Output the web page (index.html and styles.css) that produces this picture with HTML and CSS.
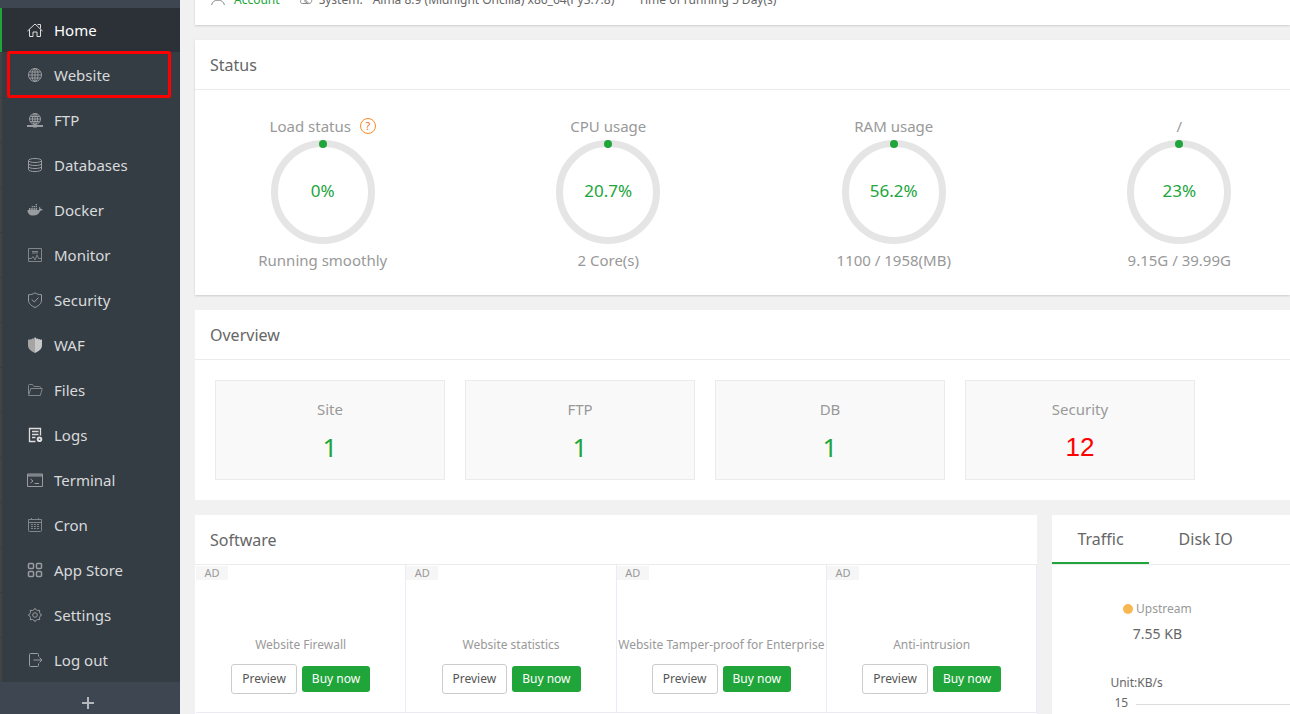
FILE: index.html
```
<!DOCTYPE html>
<html lang="en">
<head>
<meta charset="utf-8">
<title>Server panel</title>
<link rel="stylesheet" href="styles.css">
</head>
<body>
<div class="layout">
  <nav class="sidebar">
    <ul class="menu">
      <li><a class="item active" href="#"><svg class="icon" viewBox="0 0 16 16"><path d="M.5 9L8 2l7.500 7M2.500 7.500v7H6V10h4v4.500h3.500v-7M10.500 2.500h3v4"/></svg>Home</a></li>
      <li><a class="item marked" href="#"><svg class="icon" viewBox="0 0 16 16"><circle cx="8" cy="8" r="6.500"/><ellipse cx="8" cy="8" rx="3" ry="6.500"/><path d="M8 1.500v13M1.500 8h13M2.500 5h11M2.500 11h11"/></svg>Website</a></li>
      <li><a class="item" href="#"><svg class="icon" viewBox="0 0 16 16"><circle cx="8" cy="7" r="5.500"/><ellipse cx="8" cy="7" rx="2.500" ry="5.500"/><path d="M8 1.500v11M2.500 7h11M3.500 4.500h9M3.500 9.500h9"/><path class="thick" d="M0 14h16M6 14.500h4"/></svg>FTP</a></li>
      <li><a class="item" href="#"><svg class="icon" viewBox="0 0 16 16"><ellipse cx="8" cy="3.500" rx="6.500" ry="2"/><path d="M1.500 3.500v9c0 2.700 13 2.700 13 0v-9M1.500 6.500c0 2.700 13 2.700 13 0M1.500 9.500c0 2.700 13 2.700 13 0"/></svg>Databases</a></li>
      <li><a class="item" href="#"><svg class="icon solid" viewBox="0 0 16 16"><path d="M.5 8h11.200c.6-.6.700-1.800.1-2.600l.8-.4c.8.500 1.100 1.200 1.100 2 .8-.1 1.500 0 2 .4-.4.900-1.300 1.300-2.500 1.300C12 12 9.500 13.500 6.300 13.500 2.500 13.500.5 11.500.5 8zM2 6h1.500v2.500H2zM4.200 6h1.500v2.500H4.200zM6.400 6h1.500v2.500H6.400zM8.600 6h1.500v2.500H8.600zM4.700 4H6v1.200H4.700zM6.600 4H8v1.200H6.600zM8.600 2H10v1.200H8.600zM8.600 4H10v1.200H8.600z"/></svg>Docker</a></li>
      <li><a class="item" href="#"><svg class="icon dim" viewBox="0 0 16 16"><path d="M1.500 1.500h13v13h-13zM5 4.500h6M5 6h6M2 11.500h2.500L6 9.500l2 3.500 2-5 1.500 3.500H14"/></svg>Monitor</a></li>
      <li><a class="item" href="#"><svg class="icon" viewBox="0 0 16 16"><path d="M8 .8c2 1.400 4 1.900 6.500 1.900V8c0 3.500-2.500 5.700-6.500 7.500C4 13.700 1.500 11.500 1.500 8V2.700C4 2.700 6 2.200 8 .8zM4.700 7.500L7.300 10l4.200-4.500"/></svg>Security</a></li>
      <li><a class="item" href="#"><svg class="icon" viewBox="0 0 16 16"><path class="half-left" d="M8 0v16C4 14 1 12 1 8.500V2.300l1.500.7.500-1 1.500.6L5 1.500l1.500.3z"/><path class="half-right" d="M8 0v16c4-2 7-4 7-7.500V2.300l-1.500.7-.5-1-1.500.6-.5-1.100-1.500.3z"/></svg>WAF</a></li>
      <li><a class="item" href="#"><svg class="icon dim" viewBox="0 0 16 16"><path d="M1.500 12V3.500q0-1 1-1h3l1.500 2h5.500q1 0 1 1v1M1.500 13.500L3.800 6.500h11.500l-2 7z"/></svg>Files</a></li>
      <li><a class="item" href="#"><svg class="icon bright" viewBox="0 0 16 16"><path d="M8.500 14.500h-6v-13h11v7M5 4.500h6.500M5 7.500h6.500M5 10.500h3.500"/><circle class="thick" cx="12.500" cy="12.300" r="1.800"/></svg>Logs</a></li>
      <li><a class="item" href="#"><svg class="icon" viewBox="0 0 16 16"><path d="M.5 2h15v12.500H.5zM.5 3h15M.5 4h15M3.500 7l2.500 2-2.500 2M7.500 11.500H12"/></svg>Terminal</a></li>
      <li><a class="item" href="#"><svg class="icon dim" viewBox="0 0 16 16"><path d="M1.500 2.500h13v11q0 1-1 1h-11q-1 0-1-1zM1.500 5.500h13M4.500 1v2M11.500 1v2"/><path class="dots" d="M4 7.500h9M4 9.500h9M4 11.500h9"/></svg>Cron</a></li>
      <li><a class="item" href="#"><svg class="icon boxes" viewBox="0 0 16 16"><rect x="1.500" y="1.500" width="5" height="5" rx="1"/><rect x="9.500" y="1.500" width="5" height="5" rx="1"/><rect x="1.500" y="9.500" width="5" height="5" rx="1"/><rect x="9.500" y="9.500" width="5" height="5" rx="1"/></svg>App Store</a></li>
      <li><a class="item" href="#"><svg class="icon" viewBox="0 0 16 16"><path d="M6.700 3L8 1.300 9.300 3l1.200.5 2.200-.2-.2 2.200.5 1.200L14.700 8 13 9.300l-.5 1.200.2 2.200-2.200-.2-1.200.5L8 14.700 6.700 13l-1.200-.5-2.200.2.2-2.200L3 9.300 1.300 8 3 6.700l.5-1.200-.2-2.200 2.200.2z"/><circle cx="8" cy="8" r="2.300"/></svg>Settings</a></li>
      <li><a class="item" href="#"><svg class="icon" viewBox="0 0 16 16"><path d="M11.500 4.500v-2q0-1-1-1h-7q-1 0-1 1v11q0 1 1 1h7q1 0 1-1v-2M6.500 8h8.500M12.500 5.500L15 8l-2.500 2.500"/></svg>Log out</a></li>
    </ul>
    <button class="add" aria-label="Add menu item"><svg class="plus" viewBox="0 0 14 14"><path d="M7 1v12M1 7h12"/></svg></button>
  </nav>

  <main class="content">
    <section class="card infobar">
      <a class="account" href="#"><svg class="user" viewBox="0 0 16 20"><circle cx="8" cy="6" r="4"/><path d="M1.500 15c1-3 3-5 6.500-5s5.500 2 6.500 5"/></svg>Account</a>
      <span class="system"><svg class="os" viewBox="0 0 14 20"><path d="M3.500 9C1 9.500.5 13.500 3.500 13.500h6c4 0 4-4.500 1.500-4.500M5 8.500l5 5M8 9.500c-3 0-3 3 0 3"/></svg>System:</span>
      <span class="os-name">Alma 8.9 (Midnight Oncilla) x86_64(Py3.7.8)</span>
      <span>Time of running 5 Day(s)</span>
    </section>

    <section class="card">
      <h2 class="title">Status</h2>
      <div class="gauges">
        <div class="gauge">
          <h3 class="label">Load status<span class="help">?</span></h3>
          <div class="ring">0%</div>
          <p class="label">Running smoothly</p>
        </div>
        <div class="gauge">
          <h3 class="label">CPU usage</h3>
          <div class="ring">20.7%</div>
          <p class="label">2 Core(s)</p>
        </div>
        <div class="gauge">
          <h3 class="label">RAM usage</h3>
          <div class="ring">56.2%</div>
          <p class="label">1100 / 1958(MB)</p>
        </div>
        <div class="gauge">
          <h3 class="label">/</h3>
          <div class="ring">23%</div>
          <p class="label">9.15G / 39.99G</p>
        </div>
      </div>
    </section>

    <section class="card flat">
      <h2 class="title">Overview</h2>
      <div class="tiles">
        <div class="tile"><p class="label">Site</p><a class="count" href="#">1</a></div>
        <div class="tile"><p class="label">FTP</p><a class="count" href="#">1</a></div>
        <div class="tile"><p class="label">DB</p><a class="count" href="#">1</a></div>
        <div class="tile"><p class="label">Security</p><a class="count alert" href="#">12</a></div>
      </div>
    </section>

    <div class="columns">
      <section class="card flat">
        <h2 class="title">Software</h2>
        <div class="ads">
          <div class="ad"><span class="tag">AD</span><p class="name">Website Firewall</p><div class="actions"><button class="preview">Preview</button><button class="buy">Buy now</button></div></div>
          <div class="ad"><span class="tag">AD</span><p class="name">Website statistics</p><div class="actions"><button class="preview">Preview</button><button class="buy">Buy now</button></div></div>
          <div class="ad"><span class="tag">AD</span><p class="name">Website Tamper-proof for Enterprise</p><div class="actions"><button class="preview">Preview</button><button class="buy">Buy now</button></div></div>
          <div class="ad"><span class="tag">AD</span><p class="name">Anti-intrusion</p><div class="actions"><button class="preview">Preview</button><button class="buy">Buy now</button></div></div>
        </div>
      </section>
      <section class="card flat">
        <div class="tabs"><button class="tab current">Traffic</button><button class="tab">Disk IO</button></div>
        <div class="traffic">
          <div class="stat"><p class="legend"><span class="dot"></span>Upstream</p><p class="value">7.55 KB</p></div>
          <div class="chart"><p class="unit">Unit:KB/s</p><div class="axis"><span class="tick">15</span><span class="line"></span></div></div>
        </div>
      </section>
    </div>
  </main>
</div>
</body>
</html>
```
FILE: styles.css
```
* { box-sizing: border-box; }
html, body { height: 100%; }
body {
  margin: 0;
  overflow: hidden;
  background: #f1f1f1;
  color: #666;
  font-family: "Noto Sans", "Open Sans", sans-serif;
  font-size: 12px;
  line-height: 20px;
}
h2, h3, p, ul { margin: 0; padding: 0; font-weight: 400; list-style: none; }
a { color: inherit; text-decoration: none; }
button { font: inherit; color: inherit; cursor: pointer; }

.layout { display: flex; min-height: 100%; }

.sidebar {
  flex: none;
  width: 180px;
  display: flex;
  flex-direction: column;
  padding-top: 8px;
  background: #3d4651;
}
.menu { display: grid; gap: 1px; background: #353d44; }
.item {
  position: relative;
  display: flex;
  align-items: center;
  gap: 11px;
  height: 44px;
  padding-left: 25px;
  border-left: 2px solid #434343;
  color: #d8dadc;
  font-size: 15px;
}
.item.active { background: #2c3138; border-left-color: #20a53a; color: #fff; }
.marked::after {
  content: "";
  position: absolute;
  inset: -2px 9px -1px 5px;
  border: 3px solid #f00;
  border-radius: 2px;
}
.icon { width: 16px; height: 16px; fill: none; stroke: #999ca0; stroke-width: 1; }
.active .icon { stroke: #ddd; }
.icon.solid { fill: #999ca0; stroke: none; }
.icon.dim { stroke: #81868a; }
.icon.bright { stroke: #ddd; stroke-width: 1.300; }
.icon.boxes { stroke-width: 1.500; }
.half-left { fill: #a5a5a5; stroke: none; }
.half-right { fill: #c8c8c8; stroke: none; }
.thick { stroke-width: 2; }
.dots { stroke-dasharray: 2 1; }
.add {
  display: flex;
  justify-content: center;
  padding: 14px 5px 0 0;
  border: 0;
  background: none;
}
.plus { width: 14px; height: 14px; stroke: #b4b8bc; stroke-width: 2; }

.content {
  flex: 1;
  min-width: 0;
  display: flex;
  flex-direction: column;
  gap: 15px;
  padding-left: 15px;
}
.card { background: #fff; box-shadow: 0 1px 2px #ccc; overflow: hidden; }
.card.flat { box-shadow: none; }
.title {
  height: 50px;
  padding-left: 15px;
  border-bottom: 1px solid #ebebeb;
  font-size: 16px;
  line-height: 50px;
}
.label { color: #999; font-size: 15px; }

.infobar {
  display: flex;
  flex: none;
  margin-top: -10px;
  padding: 0 15px 15px;
  white-space: pre;
}
.account { display: flex; gap: 8px; margin-right: 19px; color: #20a53a; }
.user, .os { width: 16px; height: 20px; fill: none; stroke: #888; }
.os { width: 14px; }
.system { display: flex; gap: 6px; margin-right: 10px; }
.os-name { margin-right: 24px; }

.gauges {
  display: grid;
  grid-template-columns: repeat(4, 1fr);
  height: 205px;
  margin: 0 -32px 0 -15px;
  padding-top: 26px;
}
.gauge { display: flex; flex-direction: column; align-items: center; }
.gauge .label { display: flex; align-items: center; gap: 9px; height: 20px; }
.help {
  width: 16px;
  height: 16px;
  border: 1px solid #ff8a1f;
  border-radius: 50%;
  color: #fc6d26;
  font-size: 11px;
  line-height: 14px;
  text-align: center;
}
.ring {
  position: relative;
  display: flex;
  align-items: center;
  justify-content: center;
  width: 104px;
  height: 104px;
  margin: 4px 0 6px;
  padding-bottom: 3px;
  border: 7px solid #e5e5e5;
  border-radius: 50%;
  color: #20a53a;
  font-size: 17px;
}
.ring::before {
  content: "";
  position: absolute;
  top: -7px;
  left: 41px;
  width: 8px;
  height: 8px;
  border-radius: 50%;
  background: #20a53a;
}

.tiles { display: flex; gap: 20px; padding: 20px; }
.tile {
  flex: 1;
  max-width: 230px;
  height: 100px;
  padding-top: 18px;
  border: 1px solid #ebebeb;
  background: #f9f9f9;
  text-align: center;
}
.count { display: block; padding-top: 8px; color: #20a53a; font-size: 26px; line-height: 40px; }
.count.alert { color: #f00; font-family: "Liberation Sans", Arial, sans-serif; }

.columns {
  flex: 1;
  display: grid;
  grid-template-columns: minmax(0, 78fr) minmax(0, 22fr);
  gap: 15px;
}
.ads { display: grid; grid-template-columns: repeat(4, minmax(0, 1fr)); padding-left: 1px; }
.ad {
  display: flex;
  flex-direction: column;
  align-items: center;
  height: 148px;
  border: solid #ebebf8;
  border-width: 0 1px 1px 0;
}
.tag {
  align-self: flex-start;
  width: 32px;
  height: 14px;
  margin-top: 1px;
  background: #f6f6f6;
  color: #999;
  font-size: 11px;
  line-height: 14px;
  text-align: center;
}
.name { margin-top: 55px; color: #999; white-space: nowrap; }
.actions { display: flex; align-items: center; gap: 5px; margin-top: 9px; }
.preview, .buy { padding: 0 10px; border-radius: 3px; }
.preview { height: 30px; border: 1px solid #ccc; background: #fff; color: #555; }
.buy { height: 26px; border: 0; background: #20a53a; color: #fff; }

.tabs { display: flex; gap: 5px; height: 50px; border-bottom: 1px solid #ebebeb; }
.tab {
  padding: 0 25px;
  border: 0;
  border-bottom: 2px solid transparent;
  background: none;
  font-size: 16px;
  white-space: nowrap;
}
.tab.current { border-bottom-color: #20a53a; }
.traffic { padding-top: 34px; }
.stat { width: 210px; text-align: center; }
.legend { display: flex; align-items: center; justify-content: center; gap: 3px; color: #999; }
.dot { width: 10px; height: 10px; border-radius: 50%; background: #f7b851; }
.value { margin-top: 5px; font-size: 14px; }
.chart { padding: 29px 0 0 58px; }
.axis { display: flex; align-items: center; gap: 8px; padding-left: 4px; }
.line { flex: 1; height: 1px; margin-top: 3px; background: #ddd; }
```
